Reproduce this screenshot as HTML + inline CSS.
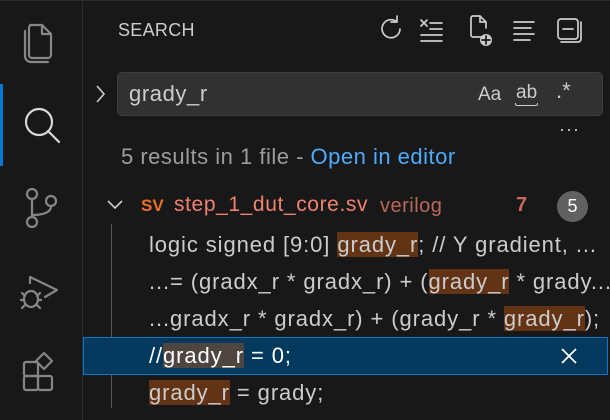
<!DOCTYPE html>
<html><head><meta charset="utf-8"><style>
*{margin:0;padding:0;box-sizing:border-box}
body{width:610px;height:420px;background:#181818;font-family:"Liberation Sans",sans-serif;color:#cccccc;position:relative;overflow:hidden}
.a{position:absolute}
.t{position:absolute;white-space:nowrap;font-size:22px;line-height:26px;letter-spacing:0.9px}
.hl{background:#623315}
svg{position:absolute;overflow:visible}
</style></head><body>
<div class="a" style="left:0;top:0;width:610px;height:1px;background:#2b2b2b"></div>
<div class="a" style="left:82px;top:0;width:1px;height:420px;background:#2b2b2b"></div>
<div class="a" style="left:0;top:84px;width:3px;height:82px;background:#0078d4"></div>

<svg style="left:0;top:0" width="82" height="420" fill="none" stroke="#868686" stroke-width="2.2" stroke-linejoin="round" stroke-linecap="round">
<path d="M30 25 h12 l9 9 v21 a3 3 0 0 1 -3 3 h-16 a3 3 0 0 1 -3 -3 v-27 a3 3 0 0 1 3 -3z M42 25 v9 h9"/>
<path d="M25 31 v25 a6 6 0 0 0 6 6 h17"/>
<circle cx="39" cy="122" r="13" stroke="#d8d8d8"/>
<path d="M48 131 l11 11" stroke="#d8d8d8"/>
<circle cx="32" cy="194" r="5"/><circle cx="32" cy="222" r="5"/><circle cx="51" cy="201" r="5"/>
<path d="M32 199 v18 M51 206 c0 6 -6 9 -19 9"/>
<path d="M30 283 v-6 l27 13 l-12 7"/>
<ellipse cx="31" cy="299" rx="7" ry="8"/><path d="M22 293 l3 3 M40 293 l-3 3 M21 300 h3 M38 300 h3 M22 308 l3 -3 M40 308 l-3 -3"/>
<rect x="24" y="362" width="14" height="14" rx="2"/><rect x="24" y="376" width="14" height="14" rx="2"/><rect x="38" y="376" width="14" height="14" rx="2"/>
<path d="M44 353 l8 8 l-8 8 l-8 -8z"/>
</svg>

<div class="t" style="left:118px;top:19px;font-size:18px;letter-spacing:0.3px;line-height:22px">SEARCH</div>
<svg style="left:0;top:0" width="610" height="60" fill="none" stroke="#cccccc" stroke-width="1.7" stroke-linecap="round">
<path d="M397 22 a9 9 0 1 0 3 7 M397 22 v-6 M397 22 h-6"/>
<path d="M421 20 l6 6 M427 20 l-6 6 M430 23 h12 M430 29 h12 M421 35 h21 M421 41 h21"/>
<path d="M481 37 h-8 a2 2 0 0 1 -2 -2 v-17 a2 2 0 0 1 2 -2 h7 l6 6 v6 M480 16 v6 h6"/>
<circle cx="486" cy="40" r="6" fill="#cccccc" stroke="none"/><path d="M486 36 v8 M482 40 h8" stroke="#181818"/>
<path d="M514 22 h20 M514 28 h17 M514 34 h20 M514 40 h16"/>
<rect x="558" y="19" width="20" height="20" rx="3"/><path d="M563 29 h10 M561 42 h17 a3 3 0 0 0 3 -3 v-17"/>
</svg>

<svg style="left:93px;top:84px" width="14" height="20" fill="none" stroke="#cccccc" stroke-width="1.6"><path d="M4 2 l7 8 l-7 8"/></svg>
<div class="a" style="left:117px;top:72px;width:486px;height:44px;background:#313131;border:1px solid #3c3c3c;border-radius:5px"></div>
<div class="t" style="left:129px;top:81px;font-size:22px;letter-spacing:0.6px">grady_r</div>
<div class="t" style="left:478px;top:82px;font-size:19px;letter-spacing:0">Aa</div>
<div class="t" style="left:516px;top:80px;font-size:19px;letter-spacing:0">ab</div>
<div class="a" style="left:515px;top:103px;width:23px;height:3px;border:1.5px solid #ccc;border-top:none;border-radius:0 0 2px 2px"></div>
<div class="t" style="left:556px;top:78px;font-size:22px;letter-spacing:0">.*</div>
<div class="t" style="left:559px;top:116px;font-size:18px;letter-spacing:1px">···</div>

<div class="t" style="left:121px;top:144px;color:#9d9d9d;letter-spacing:0.5px">5 results in 1 file - <span style="color:#4daafc">Open in editor</span></div>

<svg style="left:106px;top:198px" width="18" height="14" fill="none" stroke="#cccccc" stroke-width="1.6"><path d="M2 3 l7 7 l7 -7"/></svg>
<div class="t" style="left:141px;top:193px;font-size:17px;font-weight:bold;color:#e8702a;letter-spacing:0">SV</div>
<div class="t" style="left:174px;top:192px;font-size:21px;letter-spacing:0.6px;color:#f0826f">step_1_dut_core.sv</div>
<div class="t" style="left:380px;top:193px;font-size:20px;letter-spacing:0.5px;color:#b9685a">verilog</div>
<div class="t" style="left:516px;top:192px;font-size:20px;font-weight:bold;color:#c8695a">7</div>
<div class="a" style="left:557px;top:191px;width:31px;height:31px;border-radius:50%;background:#616161;color:#fff;font-size:18px;text-align:center;line-height:31px">5</div>

<div class="a" style="left:111px;top:224px;width:1px;height:184px;background:#585858"></div>
<div class="a" style="left:83px;top:337px;width:525px;height:38px;background:#04395e;border:1px solid #0078d4"></div>

<div class="t" style="left:149px;top:232px">logic signed [9:0] <span class="hl">grady_r</span>; // Y gradient, ...</div>
<div class="t" style="left:149px;top:269px">...= (gradx_r * gradx_r) + (<span class="hl">grady_r</span> * grady...</div>
<div class="t" style="left:149px;top:306px">...gradx_r * gradx_r) + (grady_r * <span class="hl">grady_r</span>);</div>
<div class="t" style="left:149px;top:343px;color:#ffffff">//<span style="background:#4f4540">grady_r</span> = 0;</div>
<svg style="left:560px;top:347px" width="18" height="18" fill="none" stroke="#ffffff" stroke-width="1.7"><path d="M2 2 l14 14 M16 2 l-14 14"/></svg>
<div class="t" style="left:149px;top:380px"><span class="hl">grady_r</span> = grady;</div>
</body></html>
